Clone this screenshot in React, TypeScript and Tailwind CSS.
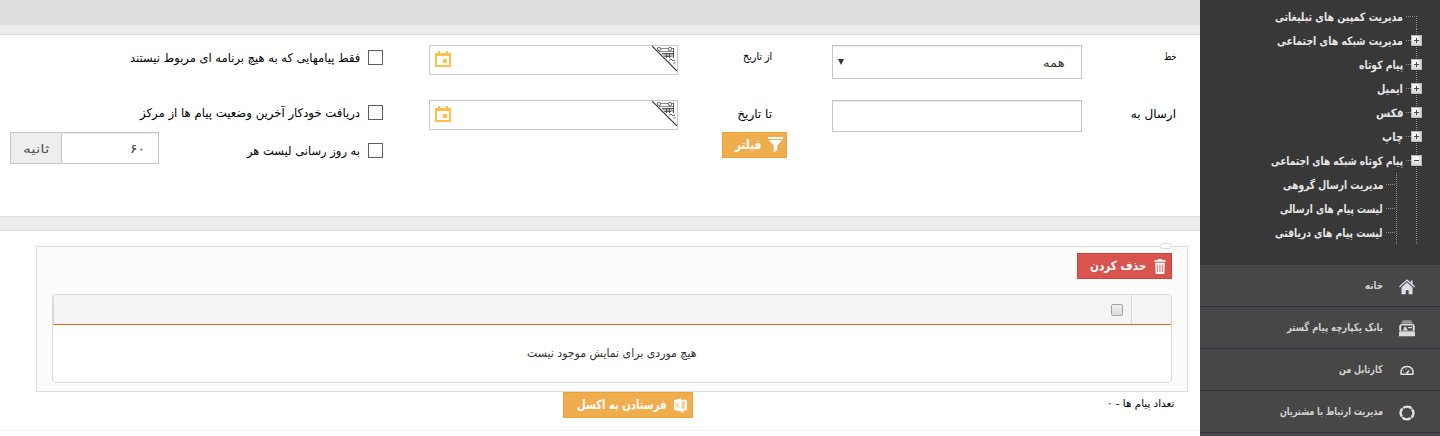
import { useLayoutEffect, useRef, useState } from "react";
import type { ReactNode } from "react";

/** Single-line text condensed or widened horizontally to a given width. */
function Fit({ w, children, className = "" }: { w: number; children: string; className?: string }) {
  const ref = useRef<HTMLSpanElement>(null);
  const [k, setK] = useState(1);
  useLayoutEffect(() => {
    if (ref.current && ref.current.offsetWidth) setK(w / ref.current.offsetWidth);
  }, [w, children]);
  return (
    <span className={`flex shrink-0 ${className}`} style={{ width: w }}>
      <span ref={ref} className="shrink-0 origin-right whitespace-nowrap" style={{ transform: `scaleX(${k})` }}>
        {children}
      </span>
    </span>
  );
}

function Expander({ open }: { open: boolean }) {
  return (
    <svg className="absolute left-0 top-[6px]" width="11" height="11" viewBox="0 0 11 11" shapeRendering="crispEdges">
      <rect width="11" height="11" fill="#b9b9b9" />
      <rect x="1" y="1" width="9" height="9" fill="#dedede" />
      <rect x="1" y="1" width="7" height="6" fill="#f6f6f6" />
      <path d="M3 5.5h5" stroke="#444" />
      {!open && <path d="M5.5 3v5" stroke="#444" />}
    </svg>
  );
}

const dotsV = "bg-[repeating-linear-gradient(to_bottom,#8a8a8a_0,#8a8a8a_1px,transparent_1px,transparent_2px)]";
const dotsH = "bg-[repeating-linear-gradient(to_right,#8a8a8a_0,#8a8a8a_1px,transparent_1px,transparent_2px)]";

function TreeRow({ w, text, kind }: { w: number; text: string; kind: "first" | "plus" | "minus" | "child" }) {
  return (
    <div className="flex h-6 pr-[18px]">
      <div className="relative w-[11px] shrink-0">
        <span className={`absolute left-[5px] bottom-0 w-px ${dotsV} ${kind === "first" ? "top-[11px]" : "top-0"}`} />
        {(kind === "plus" || kind === "minus") && <Expander open={kind === "minus"} />}
      </div>
      {kind === "child" && (
        <div className="relative w-[20px] shrink-0">
          <span className={`absolute left-[5px] top-0 bottom-0 w-px ${dotsV}`} />
        </div>
      )}
      <div className="relative w-2 shrink-0">
        <span className={`absolute left-[3px] top-[11px] h-px ${dotsH} ${kind === "first" || kind === "child" ? "w-[10px]" : "w-[5px]"}`} />
      </div>
      <Fit w={w} className="h-6 items-center pt-[2px] text-[11.5px] font-bold text-[#e6e6e6]">{text}</Fit>
    </div>
  );
}

function MenuRow({ w, text, icon }: { w: number; text: string; icon: ReactNode }) {
  return (
    <div className="flex h-[42px] shrink-0 items-center border-b border-[#33323d] bg-[#474747] pr-[25px]">
      <span className="flex w-[16px] shrink-0 justify-center pt-[2px]">{icon}</span>
      <Fit w={w} className="mr-4 text-[11px] font-bold text-[#d2d2d2]">{text}</Fit>
    </div>
  );
}

const HomeIcon = () => (
  <svg width="16" height="16" viewBox="0 0 16 16">
    <path d="M11.800 1.500h1.700v3.200L16 7.600l-.8.9L8 2 .8 8.500 0 7.600 8 .3l3.800 3.300z" fill="#dcdfe4" />
    <path d="M2.500 8.400 8 3.300l5.500 5.100v6.800H9.600v-4H6.800v4H2.500z" fill="#dcdfe4" />
  </svg>
);
const BankIcon = () => (
  <svg width="16" height="17" viewBox="0 0 16 17" fill="#d9dbdf">
    <path d="M3.500.5h9v1.200h-9zM2.500 2.300h11v1.200h-11z" opacity=".75" />
    <path fillRule="evenodd" d="M1.700 4h12.600l1.500 2v4l-1 1.500H1.200L.2 10V6zM2.300 5.500v5.200h11.400V5.500z" />
    <path d="M4 10.500c0-1.300 1-1.500 1-2.200S5.500 6.800 6.300 6.800 7.700 7.600 7.700 8.300s1 1 1 2.200zM9 7h4v1.200H9z" />
    <path d="M0 11.600h16v4.700H0z" />
  </svg>
);
const GaugeIcon = () => (
  <svg width="14" height="11" viewBox="0 0 14 11" fill="none" stroke="#e0e2e5" strokeWidth="1.500">
    <path d="M1.200 9.200C.1 4.500 3 1.400 7 1.400s6.900 3.100 5.800 7.800z" />
    <path d="M6.500 8.500 9 5.500" strokeWidth="1.700" />
    <path d="M3.500 6.500v-.8M5.500 4h1.300" strokeWidth=".8" />
  </svg>
);
const RingIcon = () => (
  <svg width="16" height="16" viewBox="0 0 16 16" fill="none" stroke="#dfe3e7">
    <g strokeWidth="2.400">
      <path d="M4.300 3A6.500 6.500 0 0 1 11 2.300" />
      <path d="M13 4.300A6.500 6.500 0 0 1 13.700 11" />
      <path d="M11.700 13A6.500 6.500 0 0 1 5 13.700" />
      <path d="M3 11.700A6.500 6.500 0 0 1 2.300 5" />
    </g>
    <path d="m10.200 4.200 3.300-.7L11.500.6zM11.800 10.200l.7 3.300 2.900-2zM5.800 11.800l-3.300.7 2 2.900zM4.200 5.800 3.500 2.500.6 4.500z" fill="#dfe3e7" stroke="none" />
  </svg>
);

const FunnelIcon = () => (
  <svg className="mb-[3px]" width="15" height="16" viewBox="0 0 15 16" fill="#fff">
    <path d="M0 1h15v2H0zM.8 4h13.400L9.300 9.500v5L5.700 16V9.500z" />
  </svg>
);
const TrashIcon = () => (
  <svg width="12" height="15" viewBox="0 0 12 15" fill="#fff">
    <path d="M4 0h4v1h3.500v1.700H.5V1H4z" />
    <path fillRule="evenodd" d="M1.200 3.700h9.600L10.300 15H1.700zM3.200 5.500v7.500h.7V5.500zm1.700 0v7.500h.6V5.500zm1.700 0v7.500h.6V5.500zm1.600 0v7.500h.7V5.500z" />
  </svg>
);
const ExcelIcon = () => (
  <svg width="13" height="15" viewBox="0 0 13 15">
    <path d="M0 2.300 7 .2V1.800h6v10.400h-3.200L9 15l-2-1.500L0 12z" fill="#fff" />
    <path d="m1.500 4.800 3.500 5M5 4.800l-3.500 5M7.300 4h4M7.300 6h4M7.300 8h4M7.300 10h4M9.300 3v7.500" stroke="#f0ad4e" strokeWidth=".7" />
  </svg>
);

function Button({ tone, w, text, icon, pad, gap }: { tone: "orange" | "red"; w: number; text: string; icon: ReactNode; pad: string; gap: string }) {
  const color = tone === "red" ? "border-[#d43f3a] bg-[#d9534f]" : "border-[#eea236] bg-[#f0ad4e]";
  return (
    <button type="button" className={`flex h-[26px] shrink-0 items-center border text-[12.5px] font-bold text-white ${color} ${pad} ${gap}`}>
      {icon}
      <Fit w={w} className="pt-px">{text}</Fit>
    </button>
  );
}

function DateField() {
  return (
    <div className="flex h-[30px] w-[249px] shrink-0 justify-between border border-[#c9c9c9] bg-white">
      <svg width="25" height="25" viewBox="0 0 25 25" fill="none">
        <path d="M5 2.500h16M7 5.500h14" stroke="#888" />
        <path d="M21.500 2v10" stroke="#555" />
        <path d="M9 7h12v4h-8z" fill="#b5b5b5" />
        <path d="M10 7.500h11M12.500 10.500H19M14.500 8v4M17.500 8v4" stroke="#555" />
        <rect x="5.500" y="1.500" width="3" height="3" rx="1" fill="#eee" stroke="#555" />
        <rect x="16.500" y="1.500" width="3" height="3" rx="1" fill="#eee" stroke="#555" />
        <path d="m17 14.500 2-1.500 2 2 2-1M21.500 18l2-2" stroke="#666" />
        <path d="M0 0 25 25" stroke="#333" strokeWidth="1.200" />
      </svg>
      <svg className="ml-[5px] mt-[5px]" width="16" height="16" viewBox="0 0 16 16" shapeRendering="crispEdges">
        <path fillRule="evenodd" fill="#ffbd4a" d="M3 0h2v2h6V0h2v2h3v14H0V2h3zM2 5v9h12V5zM8 8h4v4H8z" />
      </svg>
    </div>
  );
}

const Box = () => <span className="h-[15px] w-[15px] shrink-0 border border-[#5c5c5c] bg-white" />;

export default function App() {
  return (
    <div dir="rtl" className="flex h-[436px] w-[1440px] overflow-hidden bg-white font-['DejaVu_Sans',sans-serif] leading-none text-black">
      <aside className="flex w-[240px] shrink-0 flex-col bg-[#383838]">
        <div className="h-[265px] shrink-0 pt-[5px]">
          <TreeRow kind="first" w={128} text="مدیریت کمپین های تبلیغاتی" />
          <TreeRow kind="plus" w={126} text="مدیریت شبکه های اجتماعی" />
          <TreeRow kind="plus" w={44} text="پیام کوتاه" />
          <TreeRow kind="plus" w={26} text="ایمیل" />
          <TreeRow kind="plus" w={27} text="فکس" />
          <TreeRow kind="plus" w={21} text="چاپ" />
          <TreeRow kind="minus" w={132} text="پیام کوتاه شبکه های اجتماعی" />
          <TreeRow kind="child" w={101} text="مدیریت ارسال گروهی" />
          <TreeRow kind="child" w={103} text="لیست پیام های ارسالی" />
          <TreeRow kind="child" w={108} text="لیست پیام های دریافتی" />
        </div>
        <MenuRow w={18} text="خانه" icon={<HomeIcon />} />
        <MenuRow w={96} text="بانک یکپارچه پیام گستر" icon={<BankIcon />} />
        <MenuRow w={44} text="کارتابل من" icon={<GaugeIcon />} />
        <MenuRow w={103} text="مدیریت ارتباط با مشتریان" icon={<RingIcon />} />
        <div className="flex-1 bg-[#474747]" />
      </aside>

      <main className="flex w-[1200px] shrink-0 flex-col">
        <div className="h-[25px] shrink-0 bg-[#dedede]" />
        <div className="h-[10px] shrink-0 border-b border-[#dedede] bg-[#ebebeb]" />

        <section className="flex h-[181px] shrink-0 pt-[10px] text-[12px]">
          <div className="w-[400px] pr-6">
            <div className="flex h-[55px]">
              <div className="w-[94px] shrink-0 pt-[6px] text-[10.5px]"><Fit w={12}>خط</Fit></div>
              <div className="flex h-[34px] w-[250px] shrink-0 items-center justify-between border border-[#c6c6c6] pl-[5px] pr-4 shadow-[inset_0_1px_1px_rgba(0,0,0,0.08)]">
                <Fit w={22} className="pt-px text-[#333]">همه</Fit>
                <svg width="6" height="6" viewBox="0 0 6 6"><path d="M0 0h6L3 6z" fill="#333" /></svg>
              </div>
            </div>
            <div className="flex">
              <div className="w-[94px] shrink-0 pt-2"><Fit w={45}>ارسال به</Fit></div>
              <div className="h-8 w-[250px] shrink-0 border border-[#c6c6c6] shadow-[inset_0_1px_1px_rgba(0,0,0,0.08)]" />
            </div>
          </div>

          <div className="w-[400px]">
            <div className="flex h-[55px] pr-[28px]">
              <div className="w-[94px] shrink-0 pt-[6px] text-[10.5px]"><Fit w={29}>از تاریخ</Fit></div>
              <DateField />
            </div>
            <div className="flex h-8 pr-[28px]">
              <div className="w-[94px] shrink-0 pt-2"><Fit w={35}>تا تاریخ</Fit></div>
              <DateField />
            </div>
            <div className="flex pr-[13px]">
              <Button tone="orange" w={26} text="فیلتر" icon={<FunnelIcon />} pad="pr-[3px] pl-[12px]" gap="gap-[7px]" />
            </div>
          </div>

          <div className="w-[400px] pr-[17px]">
            <div className="flex h-[55px] gap-2 pt-[5px]">
              <Box />
              <Fit w={230} className="pt-[2px]">فقط پیامهایی که به هیچ برنامه ای مربوط نیستند</Fit>
            </div>
            <div className="flex h-8 gap-2 pt-[5px]">
              <Box />
              <Fit w={220} className="pt-[2px]">دریافت خودکار آخرین وضعیت پیام ها از مرکز</Fit>
            </div>
            <div className="flex h-8">
              <div className="flex w-[224px] shrink-0 gap-2 pt-[11px]">
                <Box />
                <Fit w={113} className="pt-[2px]">به روز رسانی لیست هر</Fit>
              </div>
              <div className="flex w-[98px] shrink-0 items-center border border-[#c6c6c6] pr-[13px] pt-[2px] text-[#333] shadow-[inset_0_1px_1px_rgba(0,0,0,0.08)]">
                <Fit w={15}>۶۰</Fit>
              </div>
              <div className="flex w-[51px] shrink-0 items-center justify-center border border-r-0 border-[#c6c6c6] bg-[#eeeeee] pt-[2px] text-[#555]">
                <Fit w={26}>ثانیه</Fit>
              </div>
            </div>
          </div>
        </section>

        <div className="h-[15px] shrink-0 border-y border-[#dedede] bg-[#ebebeb]" />

        <section className="h-[200px] shrink-0 border-b border-[#f0f0f0] pl-9 pr-3 pt-[15px]">
          <div className="relative h-[146px] border border-[#dcdcdc] bg-[#fdfdfd] bg-[repeating-conic-gradient(#f9f9f9_0_25%,#fefefe_0_50%)] bg-[length:4px_4px] px-[15px] pt-[6px]">
            <span className="absolute -top-[4px] right-[15px] h-[6px] w-[12px] rounded-[3px] border border-[#dcdcdc] bg-white" />
            <div className="flex">
              <Button tone="red" w={56} text="حذف کردن" icon={<TrashIcon />} pad="pr-[5px] pl-[12px]" gap="gap-[8px]" />
            </div>
            <div className="mt-[15px] flex h-[89px] flex-col overflow-hidden rounded border border-[#d9d9d9] bg-white">
              <div className="flex h-[30px] shrink-0 border-b border-l border-b-[#e9661c] border-l-[#d9d9d9] bg-[#f4f4f4]">
                <div className="w-[40px] border-l border-[#d9d9d9]" />
                <div className="pr-2 pt-[9px]">
                  <span className="block h-[12px] w-[12px] rounded-[2px] border border-[#a3a3a3] bg-linear-to-b from-[#eeeeee] to-[#dcdcdc]" />
                </div>
              </div>
              <div className="flex flex-1 items-center justify-center pt-px text-[11.5px] text-[#333]">
                <Fit w={169}>هیچ موردی برای نمایش موجود نیست</Fit>
              </div>
            </div>
          </div>
          <div className="flex pr-[14px]">
            <Fit w={67} className="mt-[6px] text-[10.5px]">تعداد پیام ها - ۰</Fit>
            <div className="mr-[414px]">
              <Button tone="orange" w={90} text="فرستادن به اکسل" icon={<ExcelIcon />} pad="pr-[5px] pl-[13px]" gap="gap-[7px]" />
            </div>
          </div>
        </section>
      </main>
    </div>
  );
}
